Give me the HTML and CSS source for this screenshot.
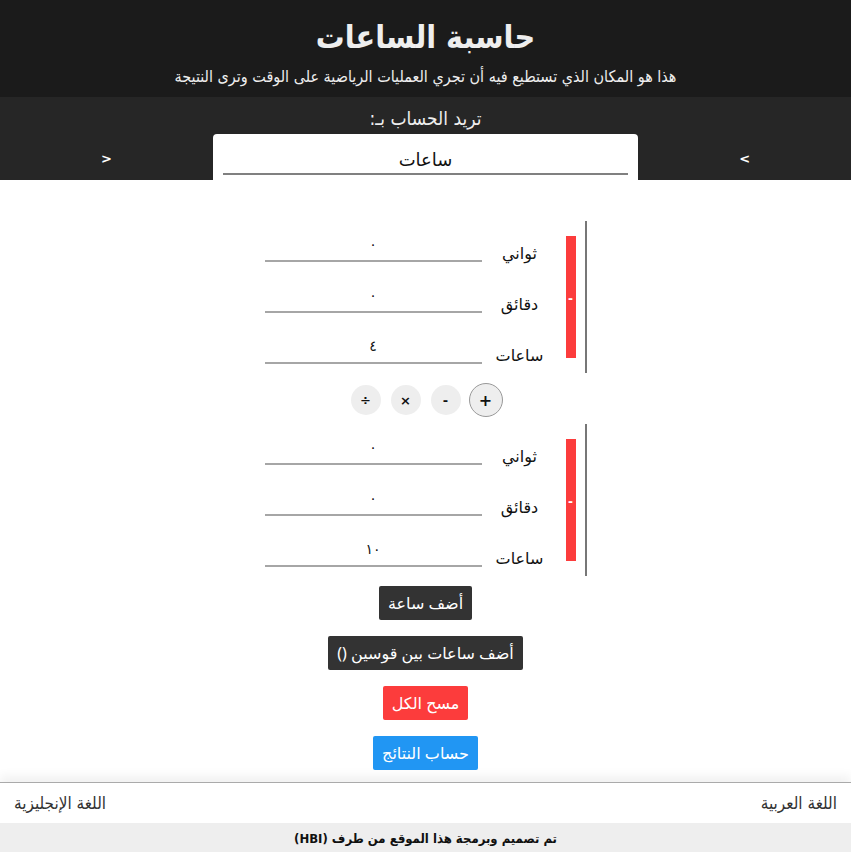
FILE: index.html
```html
<!DOCTYPE html>
<html lang="ar" dir="rtl">
<head>
<meta charset="utf-8">
<title>حاسبة الساعات</title>
<link rel="stylesheet" href="styles.css">
</head>
<body>
<header class="top">
  <h1 class="title">حاسبة الساعات</h1>
  <p class="subtitle">هذا هو المكان الذي تستطيع فيه أن تجري العمليات الرياضية على الوقت وترى النتيجة</p>
</header>
<section class="mode">
  <div class="mode-label">تريد الحساب بـ:</div>
  <div class="mode-row">
    <div class="arrow-cell"><span class="arrow" dir="ltr">&gt;</span></div>
    <div class="mode-card"><div class="mode-value">ساعات</div></div>
    <div class="arrow-cell"><span class="arrow" dir="ltr">&lt;</span></div>
  </div>
</section>
<main class="main">
  <div class="group">
    <div class="remove">-</div>
    <div class="fields">
      <div class="row"><span class="label">ثواني</span><div class="input">٠</div></div>
      <div class="row"><span class="label">دقائق</span><div class="input">٠</div></div>
      <div class="row"><span class="label">ساعات</span><div class="input">٤</div></div>
    </div>
  </div>
  <div class="ops">
    <span class="op op-active">+</span>
    <span class="op">-</span>
    <span class="op">×</span>
    <span class="op">÷</span>
  </div>
  <div class="group">
    <div class="remove">-</div>
    <div class="fields">
      <div class="row"><span class="label">ثواني</span><div class="input">٠</div></div>
      <div class="row"><span class="label">دقائق</span><div class="input">٠</div></div>
      <div class="row"><span class="label">ساعات</span><div class="input">١٠</div></div>
    </div>
  </div>
  <div class="actions">
    <button class="btn btn-dark">أضف ساعة</button>
    <button class="btn btn-dark">أضف ساعات بين قوسين ()</button>
    <button class="btn btn-red">مسح الكل</button>
    <button class="btn btn-blue">حساب النتائج</button>
  </div>
</main>
<footer class="footer">
  <div class="langs">
    <span class="lang">اللغة العربية</span>
    <span class="lang">اللغة الإنجليزية</span>
  </div>
  <div class="credit">تم تصميم وبرمجة هذا الموقع من طرف (HBI)</div>
</footer>
</body>
</html>
```
FILE: styles.css
```css
html, body {
  margin: 0;
  padding: 0;
  background: #fff;
}
body {
  font-family: "Noto Sans", "DejaVu Sans", sans-serif;
  color: #222;
}
.top {
  background: #1b1b1b;
  color: #eee;
  text-align: center;
  height: 97px;
  box-sizing: border-box;
  padding-top: 15px;
  font-family: "DejaVu Sans Condensed", "DejaVu Sans", sans-serif;
}
.title {
  margin: 0;
  font-size: 32px;
  line-height: 44px;
  font-weight: bold;
}
.subtitle {
  margin: 7px 0 0;
  font-size: 16px;
  line-height: 22px;
}
.mode {
  background: #262626;
  color: #eee;
  height: 83px;
  box-sizing: border-box;
  padding-top: 8px;
  font-family: "DejaVu Sans Condensed", "DejaVu Sans", sans-serif;
}
.mode-label {
  text-align: center;
  font-size: 19px;
  line-height: 26px;
  height: 29px;
}
.mode-row {
  display: flex;
  direction: ltr;
  height: 46px;
}
.arrow-cell {
  width: 25%;
  display: flex;
  align-items: center;
  justify-content: center;
}
.arrow {
  font-family: "DejaVu Sans", sans-serif;
  font-weight: bold;
  font-size: 13px;
  color: #fff;
  padding-top: 2px;
}
.mode-card {
  width: 50%;
  background: #fff;
  border-radius: 4px 4px 0 0;
  padding: 0 10px;
  box-sizing: border-box;
}
.mode-value {
  font-family: "Noto Sans", "DejaVu Sans", sans-serif;
  color: #111;
  text-align: center;
  font-size: 18px;
  line-height: 28px;
  padding-top: 11px;
  border-bottom: 2px solid #808080;
}
.main {
  padding-top: 41px;
  padding-bottom: 11px;
}
.group {
  width: 322px;
  margin: 0 auto;
  height: 152px;
  box-sizing: border-box;
  border-right: 2px solid #777;
  display: flex;
  align-items: center;
}
.remove {
  width: 10px;
  height: 122px;
  margin-right: 9px;
  background: #fc3c3c;
  color: #fff;
  font-size: 14px;
  font-weight: bold;
  display: flex;
  align-items: center;
  justify-content: center;
}
.fields {
  margin-right: 8px;
  display: flex;
  flex-direction: column;
  gap: 20px;
}
.row {
  display: flex;
  align-items: flex-end;
}
.label {
  width: 76px;
  text-align: center;
  font-size: 16px;
  line-height: 24px;
  color: #111;
  margin-bottom: -3px;
}
.input {
  width: 217px;
  height: 31px;
  box-sizing: border-box;
  border-bottom: 2px solid #a6a6a6;
  text-align: center;
  font-size: 14px;
  line-height: 26px;
  color: #111;
}
.ops {
  display: flex;
  justify-content: center;
  align-items: center;
  gap: 10px;
  margin: 10px auto 7px;
  padding-left: 2px;
}
.op {
  width: 30px;
  height: 30px;
  border-radius: 50%;
  background: #eee;
  display: flex;
  align-items: center;
  justify-content: center;
  font-family: "DejaVu Sans", sans-serif;
  font-size: 13px;
  font-weight: bold;
  color: #111;
}
.op-active {
  width: 34px;
  height: 34px;
  box-sizing: border-box;
  border: 1px solid #999;
  font-size: 16px;
  margin-left: -2px;
}
.actions {
  display: flex;
  flex-direction: column;
  align-items: center;
  gap: 16px;
  margin-top: 10px;
}
.btn {
  font-family: "Noto Sans", "DejaVu Sans", sans-serif;
  font-size: 16px;
  height: 34px;
  padding: 0 9px;
  border: none;
  border-radius: 2px;
  color: #fff;
  line-height: 34px;
}
.btn-dark { background: #333; }
.btn-red { background: #fc3c3c; }
.btn-blue { background: #2196f3; }
.footer {
  border-top: 1px solid #aaa;
  box-shadow: 0 -6px 10px rgba(0, 0, 0, 0.06);
  margin-top: 1px;
}
.langs {
  display: flex;
  justify-content: space-between;
  padding: 0 14px;
  height: 40px;
  align-items: center;
  font-family: "DejaVu Sans Condensed", "DejaVu Sans", sans-serif;
  font-size: 17px;
  color: #333;
}
.credit {
  background: #eee;
  text-align: center;
  font-family: "DejaVu Sans Condensed", "DejaVu Sans", sans-serif;
  font-weight: bold;
  font-size: 13px;
  line-height: 32px;
  color: #111;
  height: 40px;
}
```
